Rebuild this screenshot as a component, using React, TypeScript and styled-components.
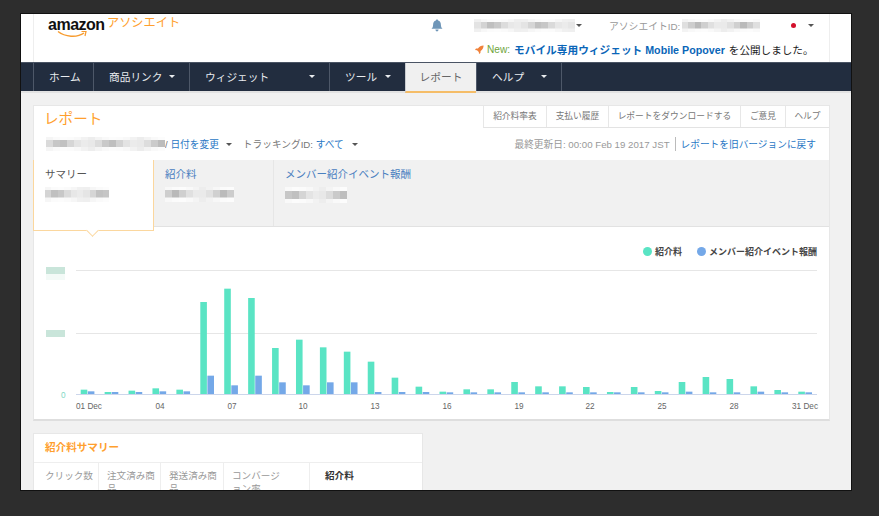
import React from "react";
import styled, { createGlobalStyle } from "styled-components";

const Global = createGlobalStyle`
  html, body { margin: 0; padding: 0; background: #2d2d2d; }
  body { font-family: "Liberation Sans", "Noto Sans CJK JP", sans-serif; }
  * { box-sizing: border-box; }
`;

const Page = styled.div`
  width: 879px;
  height: 516px;
  padding: 14px 28px 26px 21px;
  overflow: hidden;
`;
const Win = styled.div`
  width: 830px;
  height: 476px;
  background: #f1f1f1;
  overflow: hidden;
  box-shadow: 0 0 0 1px #111;
`;
const Header = styled.header`
  height: 48px;
  background: #fff;
  padding: 0 21px 0 12px;
`;
const HeaderInner = styled.div`
  height: 48px;
  border-left: 1px solid #eee;
  border-right: 1px solid #eee;
`;
const TopRow = styled.div`
  height: 23px;
  display: flex;
  align-items: center;
`;
const Logo = styled.div`
  width: 397px;
  padding-left: 14px;
  display: flex;
  align-items: flex-start;
  height: 23px;
  color: #ff9f2e;
  font-size: 12.2px;
  line-height: 18px;
`;
const LogoWord = styled.span`
  position: relative;
  display: block;
  color: #111;
  font-weight: 700;
  font-size: 16px;
  line-height: 21px;
  letter-spacing: -0.5px;
  margin-right: 3px;
  width: 56px;
`;
const Smile = styled.svg`
  position: absolute;
  left: 9px;
  top: 16px;
`;
const RedactedBlock = styled.span<{ $w: number; $h: number; $ml?: number; $top: string; $mid: string }>`
  display: block;
  flex: none;
  width: ${(p) => p.$w}px;
  height: ${(p) => p.$h}px;
  margin-left: ${(p) => p.$ml ?? 0}px;
  background-image: ${(p) => p.$mid}, ${(p) => p.$top};
  background-size: 100% 50%, 100% 100%;
  background-position: 0 45%, 0 0;
  background-repeat: no-repeat;
  filter: blur(0.5px);
`;
function bands(seed: number, light: boolean, n: number) {
  const stops: string[] = [];
  for (let i = 0; i < n; i++) {
    const r = Math.abs(Math.sin(seed + i * 2.7));
    const base = light ? 236 + Math.round(r * 16) : 185 + Math.round(r * 50);
    const c = `rgb(${base},${base},${base})`;
    stops.push(`${c} ${(i / n) * 100}%`, `${c} ${((i + 1) / n) * 100}%`);
  }
  return `linear-gradient(to right, ${stops.join(",")})`;
}
const Redacted = ({ w, h, ml, seed }: { w: number; h: number; ml?: number; seed: number }) => (
  <RedactedBlock $w={w} $h={h} $ml={ml} $top={bands(seed + 5, true, Math.ceil(w / 7))} $mid={bands(seed, false, Math.ceil(w / 7))} />
);
const Caret = styled.i<{ $ml?: number; $color?: string }>`
  display: inline-block;
  flex: none;
  width: 0;
  height: 0;
  margin-left: ${(p) => p.$ml ?? 0}px;
  border-left: 3px solid transparent;
  border-right: 3px solid transparent;
  border-top: 3px solid ${(p) => p.$color ?? "#555"};
  vertical-align: middle;
`;
const Bell = styled.svg`
  flex: none;
  color: #6f96b8;
`;
const IdLabel = styled.span`
  margin-left: 27px;
  font-size: 9.8px;
  color: #999;
  white-space: nowrap;
`;
const Flag = styled.span`
  display: block;
  flex: none;
  width: 5px;
  height: 5px;
  border-radius: 50%;
  background: #d3102c;
  margin-left: 31px;
`;
const NewsRow = styled.div`
  height: 24px;
  padding-left: 441px;
  display: flex;
  align-items: center;
  font-size: 10.6px;
  white-space: nowrap;
  color: #222;
`;
const NewLabel = styled.span`
  color: #6ea53c;
  font-size: 10.1px;
  margin: 0 4px 0 3px;
`;
const NewsLink = styled.a`
  color: #0a66b8;
  font-weight: 700;
  font-size: 10.7px;
  margin-right: 4px;
`;
const Nav = styled.nav`
  height: 31px;
  background: #e2e2e2;
`;
const NavBar = styled.ul`
  height: 29px;
  margin: 0;
  padding: 0 0 0 12px;
  list-style: none;
  display: flex;
  background: #222d3f;
  border-top: 1px solid #4a5464;
`;
const NavItem = styled.li<{ $w: number; $active?: boolean }>`
  width: ${(p) => p.$w}px;
  height: ${(p) => (p.$active ? 30 : 28)}px;
  border-left: 1px solid #4e5869;
  padding: 0 ${(p) => (p.$active ? "0" : "14px 2px 15px")};
  display: flex;
  align-items: center;
  justify-content: ${(p) => (p.$active ? "center" : "space-between")};
  font-size: 10.7px;
  white-space: nowrap;
  color: ${(p) => (p.$active ? "#666" : "#e9ecef")};
  background: ${(p) => (p.$active ? "#f0f0f0" : "transparent")};
  ${(p) => p.$active && "border-bottom: 2px solid #f5bd68; border-left-color: #c9ccd0; padding-bottom: 2px;"}
`;
const NavEnd = styled.li`
  border-left: 1px solid #4e5869;
`;
const Main = styled.main`
  padding: 12px 21px 0 12px;
  display: flex;
  flex-direction: column;
  gap: 12px;
`;
const Card = styled.section`
  width: 797px;
  height: 316px;
  background: #fff;
  border: 1px solid #e7e7e7;
  border-bottom: 2px solid #dedede;
  flex: none;
`;
const CardHead = styled.div`
  height: 22px;
  display: flex;
  justify-content: space-between;
`;
const CardTitle = styled.h1`
  margin: 0;
  padding: 3px 0 0 10px;
  font-size: 14.6px;
  line-height: 20px;
  font-weight: 400;
  color: #ff9f2e;
`;
const Actions = styled.div`
  display: flex;
  border-bottom: 1px solid #e3e3e3;
  border-left: 1px solid #e7e7e7;
`;
const ActionBtn = styled.span<{ $w: number }>`
  width: ${(p) => p.$w}px;
  text-align: center;
  font-size: 8.75px;
  line-height: 21px;
  color: #777;
  & + & { border-left: 1px solid #e7e7e7; }
`;
const FilterRow = styled.div`
  height: 32px;
  padding: 0 13px 0 12px;
  display: flex;
  align-items: center;
  font-size: 9.7px;
  white-space: nowrap;
`;
const Link = styled.a`
  color: #2a78c5;
`;
const Muted = styled.span<{ $ml?: number }>`
  color: #777;
  margin-left: ${(p) => p.$ml ?? 0}px;
`;
const Updated = styled.span`
  margin-left: auto;
  color: #999;
  font-size: 9.7px;
`;
const Divider = styled.span`
  width: 1px;
  height: 14px;
  background: #bbb;
  margin: 0 5px;
`;
const Tabs = styled.div`
  height: 67px;
  background: #f1f1f1;
  border-bottom: 1px solid #e2e2e2;
  display: flex;
`;
const Tab = styled.div<{ $w?: number; $active?: boolean }>`
  position: relative;
  flex: ${(p) => (p.$w ? `0 0 ${p.$w}px` : "1")};
  height: ${(p) => (p.$active ? 71 : 66)}px;
  margin-left: ${(p) => (p.$active ? -1 : 0)}px;
  padding: 7px 0 0 11px;
  font-size: 10.5px;
  line-height: 15px;
  color: ${(p) => (p.$active ? "#555" : "#4a80c0")};
  background: ${(p) => (p.$active ? "#fff" : "transparent")};
  ${(p) => p.$w && `border-right: 1px solid ${p.$active ? "#fbd79e" : "#e6e6e6"};`}
  ${(p) => p.$active && "border-left: 1px solid #fbd79e; border-bottom: 1px solid #fbd79e; z-index: 1;"}
`;
const TabValue = styled.div`
  margin-top: 5px;
`;
const TabArrow = styled.span`
  position: absolute;
  left: 54px;
  bottom: -5px;
  width: 9px;
  height: 9px;
  background: #fff;
  border-right: 1px solid #fbd79e;
  border-bottom: 1px solid #fbd79e;
  transform: rotate(45deg);
`;
const Legend = styled.div`
  height: 35px;
  padding: 13px 12px 0 0;
  display: flex;
  justify-content: flex-end;
  align-items: center;
  font-size: 9px;
  font-weight: 700;
  color: #444;
`;
const LegendItem = styled.span<{ $color: string }>`
  display: flex;
  align-items: center;
  margin-left: 15px;
  &::before {
    content: "";
    width: 9px;
    height: 9px;
    border-radius: 50%;
    background: ${(p) => p.$color};
    margin-right: 3px;
  }
`;
const ChartSvg = styled.svg`
  display: block;
`;
const AxisText = styled.text<{ $fill?: string }>`
  font-size: 8.2px;
  fill: ${(p) => p.$fill ?? "#666"};
  font-family: "Liberation Sans", sans-serif;
`;
const SummaryCard = styled.section`
  width: 390px;
  background: #fff;
  border: 1px solid #e7e7e7;
  flex: none;
`;
const SummaryTitle = styled.h2`
  margin: 0;
  height: 29px;
  padding-left: 11px;
  font-size: 10.6px;
  line-height: 27px;
  font-weight: 700;
  color: #ff9f2e;
  border-bottom: 1px solid #eee;
`;
const SummaryTable = styled.div`
  display: grid;
  grid-template-columns: 64px 62px 63px 86px 1fr;
`;
const Th = styled.div<{ $strong?: boolean; $pl?: number; $pr?: number }>`
  padding: 6px ${(p) => p.$pr ?? 2}px 0 ${(p) => p.$pl ?? 8}px;
  height: 60px;
  font-size: 9.6px;
  line-height: 13px;
  color: ${(p) => (p.$strong ? "#333" : "#999")};
  font-weight: ${(p) => (p.$strong ? 700 : 400)};
  & + & { border-left: 1px solid #eee; }
`;

const GREEN = [390,397,393,386,390,127,87,115,265,240,263,276,306,354,381].map((t) => (403 - t) / 3)
  .concat([155,148,148,126,139,139,141,156,141,153,126,111,117,139,150,155].map((t) => (162 - t) / 3));
const BLUE = [395,397,397,395,395,348,377,348,368,377,368,368,397,397,397].map((t) => (403 - t) / 3)
  .concat([157,157,157,157,157,157,157,157,157,157,155,157,157,155,157,157].map((t) => (162 - t) / 3));
const XL: [string, number, "start" | "middle" | "end"][] = [
  ["01 Dec", 76, "start"], ["04", 160, "middle"], ["07", 232, "middle"], ["10", 303, "middle"],
  ["13", 375, "middle"], ["16", 447, "middle"], ["19", 519, "middle"], ["22", 590, "middle"],
  ["25", 662, "middle"], ["28", 734, "middle"], ["31 Dec", 818, "end"],
];

const Chart = () => {
  const ox = 34, oy = 262;
  const base = 394 - oy;
  return (
    <ChartSvg width={795} height={156} viewBox="0 0 795 156">
      <g transform={`translate(${-ox} 0)`}>
        <line x1={76} x2={817} y1={270.5 - oy} y2={270.5 - oy} stroke="#e6e6e6" />
        <line x1={76} x2={817} y1={333.5 - oy} y2={333.5 - oy} stroke="#e6e6e6" />
        <rect x={46} y={267 - oy} width={19} height={7} fill="#c9e5da" />
        <rect x={46} y={274 - oy} width={19} height={6} fill="#f3faf7" />
        <rect x={46} y={330 - oy} width={19} height={7} fill="#c9e5da" />
        {GREEN.map((h, i) => (
          <g key={i}>
            <rect x={80.7 + i * 23.92} y={base - h} width={6.6} height={h} fill="#5ae4c4" />
            <rect x={87.8 + i * 23.92} y={base - BLUE[i]} width={6.6} height={BLUE[i]} fill="#74a8e8" />
          </g>
        ))}
        <line x1={76} x2={817} y1={base + 0.5} y2={base + 0.5} stroke="#ccd6eb" />
        <AxisText x={61} y={398 - oy} $fill="#7fd8c4">0</AxisText>
        {XL.map(([t, x, a]) => (
          <AxisText key={t} x={x} y={409 - oy} textAnchor={a}>{t}</AxisText>
        ))}
      </g>
    </ChartSvg>
  );
};

export default function App() {
  return (
    <Page>
      <Global />
      <Win>
        <Header>
          <HeaderInner>
            <TopRow>
              <Logo>
                <LogoWord>
                  amazon
                  <Smile width="31" height="9" viewBox="0 0 31 9">
                    <path d="M1 1.5C8 7 20 8 27 3" fill="none" stroke="#f79b2e" strokeWidth="1.4" />
                    <path d="M24.5 1.5L29 1.5L28 6" fill="none" stroke="#f79b2e" strokeWidth="1.2" />
                  </Smile>
                </LogoWord>
                アソシエイト
              </Logo>
              <Bell width="12" height="13" viewBox="0 0 12 13">
                <path fill="currentColor" d="M6 0.5c.7 0 1.1.5 1.1 1.1C9 2.1 9.9 3.8 9.9 5.8c0 2 .6 3 1.6 4H.5c1-1 1.6-2 1.6-4 0-2 .9-3.7 2.8-4.2C4.9 1 5.3.5 6 .5zM4.4 10.6h3.2C7.5 11.6 6.9 12.4 6 12.4s-1.5-.8-1.6-1.8z" />
              </Bell>
              <Redacted w={101} h={13} ml={31} seed={1} />
              <Caret $ml={1} />
              <IdLabel>アソシエイトID:</IdLabel>
              <Redacted w={78} h={13} ml={2} seed={4} />
              <Flag />
              <Caret $ml={12} />
            </TopRow>
            <NewsRow>
              <svg width="9" height="9" viewBox="0 0 9 9">
                <path fill="#f0813a" d="M8.6.4C6 .5 4.2 1.6 3 3.4L1 3.6 0 5l2 .2 1.8 1.8.2 2 1.4-1 .2-2C7.4 4.8 8.5 3 8.6.4z" />
              </svg>
              <NewLabel>New:</NewLabel>
              <NewsLink>モバイル専用ウィジェット Mobile Popover</NewsLink>
              を公開しました。
            </NewsRow>
          </HeaderInner>
        </Header>
        <Nav>
          <NavBar>
            <NavItem $w={60}>ホーム</NavItem>
            <NavItem $w={96}>商品リンク<Caret $color="#e9ecef" /></NavItem>
            <NavItem $w={140}>ウィジェット<Caret $color="#e9ecef" /></NavItem>
            <NavItem $w={76}>ツール<Caret $color="#e9ecef" /></NavItem>
            <NavItem $w={71} $active>レポート</NavItem>
            <NavItem $w={85}>ヘルプ<Caret $color="#e9ecef" /></NavItem>
            <NavEnd />
          </NavBar>
        </Nav>
        <Main>
          <Card>
            <CardHead>
              <CardTitle>レポート</CardTitle>
              <Actions>
                <ActionBtn $w={62}>紹介料率表</ActionBtn>
                <ActionBtn $w={62}>支払い履歴</ActionBtn>
                <ActionBtn $w={132}>レポートをダウンロードする</ActionBtn>
                <ActionBtn $w={45}>ご意見</ActionBtn>
                <ActionBtn $w={44}>ヘルプ</ActionBtn>
              </Actions>
            </CardHead>
            <FilterRow>
              <Redacted w={119} h={14} seed={7} />
              <Muted>/</Muted>
              <Link>&nbsp;日付を変更</Link>
              <Caret $ml={7} />
              <Muted $ml={11}>トラッキングID:</Muted>
              <Link>&nbsp;すべて</Link>
              <Caret $ml={8} />
              <Updated>最終更新日: 00:00 Feb 19 2017 JST</Updated>
              <Divider />
              <Link>レポートを旧バージョンに戻す</Link>
            </FilterRow>
            <Tabs>
              <Tab $w={121} $active>
                サマリー
                <TabValue><Redacted w={64} h={15} seed={10} /></TabValue>
                <TabArrow />
              </Tab>
              <Tab $w={120}>
                紹介料
                <TabValue><Redacted w={69} h={15} seed={13} /></TabValue>
              </Tab>
              <Tab>
                メンバー紹介イベント報酬
                <TabValue><Redacted w={62} h={16} seed={16} /></TabValue>
              </Tab>
            </Tabs>
            <Legend>
              <LegendItem $color="#5ae4c4">紹介料</LegendItem>
              <LegendItem $color="#74a8e8">メンバー紹介イベント報酬</LegendItem>
            </Legend>
            <Chart />
          </Card>
          <SummaryCard>
            <SummaryTitle>紹介料サマリー</SummaryTitle>
            <SummaryTable>
              <Th $pl={11}>クリック数</Th>
              <Th>注文済み商品</Th>
              <Th>発送済み商品</Th>
              <Th $pr={27}>コンバージョン率</Th>
              <Th $strong $pl={15}>紹介料</Th>
            </SummaryTable>
          </SummaryCard>
        </Main>
      </Win>
    </Page>
  );
}
